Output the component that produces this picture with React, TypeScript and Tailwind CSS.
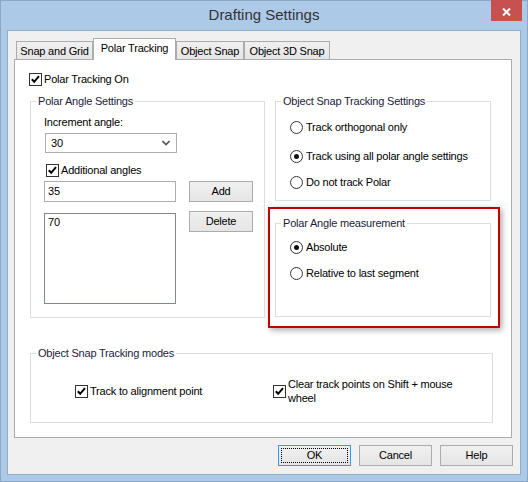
import React from "react";

function CheckBox() {
  return (
    <span className="w-[13px] h-[13px] shrink-0 border border-[#333] bg-white flex items-center justify-center">
      <svg width="11" height="11" viewBox="0 0 11 11">
        <polyline points="1.8,5.2 4.2,7.8 9,2.2" fill="none" stroke="#000" strokeWidth="2" />
      </svg>
    </span>
  );
}

function Radio({ checked }: { checked?: boolean }) {
  return (
    <span className="w-[13px] h-[13px] shrink-0 rounded-full border border-[#333] bg-white flex items-center justify-center">
      {checked && <span className="w-[5px] h-[5px] rounded-full bg-[#111]" />}
    </span>
  );
}

function GroupBox({
  label,
  className,
  children,
}: {
  label: string;
  className: string;
  children?: React.ReactNode;
}) {
  return (
    <div className={`relative border border-[#dcdcdc] ${className}`}>
      <span className="absolute top-[-7px] left-[5px] px-[2px] bg-white leading-[13px] text-[#1c1c3a] whitespace-nowrap">
        {label}
      </span>
      {children}
    </div>
  );
}

function PushButton({ label, w, focused }: { label: string; w: string; focused?: boolean }) {
  return (
    <div
      className={`relative ${w} h-[21px] shrink-0 border ${
        focused ? "border-[#3399ff]" : "border-[#acacac]"
      } bg-linear-to-b from-[#f0f0f0] to-[#e5e5e5] flex items-center justify-center leading-[13px]`}
    >
      {focused && <span className="absolute inset-[2px] border border-dotted border-black" />}
      {label}
    </div>
  );
}

function Tab({ label, w, active }: { label: string; w: string; active?: boolean }) {
  if (active) {
    return (
      <div
        className={`relative z-10 ${w} h-[22px] -mb-px border border-b-0 border-[#acacac] bg-white flex justify-center pt-[3px] leading-[13px]`}
      >
        {label}
      </div>
    );
  }
  return (
    <div
      className={`${w} h-[18px] border border-b-0 border-[#acacac] bg-linear-to-b from-[#f0f0f0] to-[#e5e5e5] flex justify-center pt-[3px] leading-[13px]`}
    >
      {label}
    </div>
  );
}

export default function App() {
  return (
    <div className="w-[528px] h-[482px] bg-[#adc9e8] border border-[#8ba7c7] relative flex flex-col font-['Liberation_Sans',Arial,sans-serif] text-[11px] tracking-[-0.2px] text-black select-none">
      {/* title bar */}
      <div className="h-[29px] flex items-center justify-center text-[15px] tracking-normal text-[#333]">
        Drafting Settings
      </div>
      <div className="absolute top-[-1px] right-[5px] w-[31px] h-[21px] bg-[#c75050] flex items-center justify-center pt-[2px]">
        <svg width="9" height="8" viewBox="0 0 9 8">
          <path d="M1 0.5 L8 7.5 M8 0.5 L1 7.5" stroke="#fff" strokeWidth="2" />
        </svg>
      </div>

      {/* client area */}
      <div className="ml-[6px] w-[514px] h-[445px] border border-[#92abc8] bg-[#f0f0f0] flex flex-col">
        {/* tab strip */}
        <div className="flex items-end h-[21px] mt-[7px] pl-[8px]">
          <Tab label="Snap and Grid" w="w-[77px]" />
          <Tab label="Polar Tracking" w="w-[83px]" active />
          <Tab label="Object Snap" w="w-[68px]" />
          <Tab label="Object 3D Snap" w="w-[86px]" />
        </div>

        {/* tab page */}
        <div className="ml-[6px] w-[498px] h-[379px] border border-[#acacac] bg-white">
          <div className="pl-[14px] pt-[13px] flex flex-col">
            <div className="flex items-center gap-[2px] h-[13px] leading-[13px]">
              <CheckBox />
              Polar Tracking On
            </div>

            <div className="flex items-start gap-[10px] mt-[15px] ml-px">
              <GroupBox label="Polar Angle Settings" className="w-[235px] h-[217px]">
                <div className="flex flex-col pl-[13px]">
                  <div className="mt-[14px] leading-[13px]">Increment angle:</div>
                  <div className="mt-[4px] ml-px w-[132px] h-[20px] border border-[#acacac] bg-white flex items-center justify-between pl-[5px] pr-[6px] leading-[13px]">
                    30
                    <svg width="8" height="6" viewBox="0 0 8 6">
                      <polyline points="0.5,1 4,4.5 7.5,1" fill="none" stroke="#555" strokeWidth="1.6" />
                    </svg>
                  </div>
                  <div className="mt-[11px] ml-[2px] flex items-center gap-[2px] h-[13px] leading-[13px]">
                    <CheckBox />
                    Additional angles
                  </div>
                  <div className="mt-[4px] flex items-start">
                    <div className="w-[132px] h-[21px] border border-[#abadb3] bg-white flex items-center pl-[3px] leading-[13px]">
                      35
                    </div>
                    <div className="ml-[13px]">
                      <PushButton label="Add" w="w-[64px]" />
                    </div>
                  </div>
                  <div className="mt-[9px] flex items-start">
                    <div className="mt-[2px] w-[132px] h-[91px] border border-[#828790] bg-white pl-[3px] pt-[2px] leading-[13px]">
                      70
                    </div>
                    <div className="ml-[13px]">
                      <PushButton label="Delete" w="w-[64px]" />
                    </div>
                  </div>
                </div>
              </GroupBox>

              <div className="w-[216px] flex flex-col">
                <GroupBox label="Object Snap Tracking Settings" className="h-[100px]">
                  <div className="flex flex-col pl-[14px] leading-[13px]">
                    <div className="mt-[19px] flex items-center gap-[3px] h-[13px]">
                      <Radio />
                      Track orthogonal only
                    </div>
                    <div className="mt-[16px] flex items-center gap-[3px] h-[13px]">
                      <Radio checked />
                      Track using all polar angle settings
                    </div>
                    <div className="mt-[13px] flex items-center gap-[3px] h-[13px]">
                      <Radio />
                      Do not track Polar
                    </div>
                  </div>
                </GroupBox>

                <div className="mt-[6px] -ml-[7px] -mr-[9px] border-2 border-[#c00000] pt-[14px] pb-[9px] pl-[5px] pr-[7px] shadow-[2px_2px_6px_rgba(0,0,0,0.35)]">
                  <GroupBox label="Polar Angle measurement" className="h-[94px]">
                    <div className="flex flex-col pl-[14px] leading-[13px]">
                      <div className="mt-[17px] flex items-center gap-[3px] h-[13px]">
                        <Radio checked />
                        Absolute
                      </div>
                      <div className="mt-[13px] flex items-center gap-[3px] h-[13px]">
                        <Radio />
                        Relative to last segment
                      </div>
                    </div>
                  </GroupBox>
                </div>
              </div>
            </div>

            <GroupBox label="Object Snap Tracking modes" className="mt-[25px] ml-px w-[463px] h-[70px]">
              <div className="mt-[23px] pl-[44px] flex items-center">
                <div className="w-[198px] flex items-center gap-[2px] leading-[13px]">
                  <CheckBox />
                  Track to alignment point
                </div>
                <div className="flex items-center gap-[2px]">
                  <CheckBox />
                  <span className="w-[180px] leading-[14px]">Clear track points on Shift + mouse wheel</span>
                </div>
              </div>
            </GroupBox>
          </div>
        </div>

        {/* dialog buttons */}
        <div className="flex justify-end gap-[8px] pr-[7px] mt-[7px]">
          <PushButton label="OK" w="w-[73px]" focused />
          <PushButton label="Cancel" w="w-[73px]" />
          <PushButton label="Help" w="w-[73px]" />
        </div>
      </div>
    </div>
  );
}
